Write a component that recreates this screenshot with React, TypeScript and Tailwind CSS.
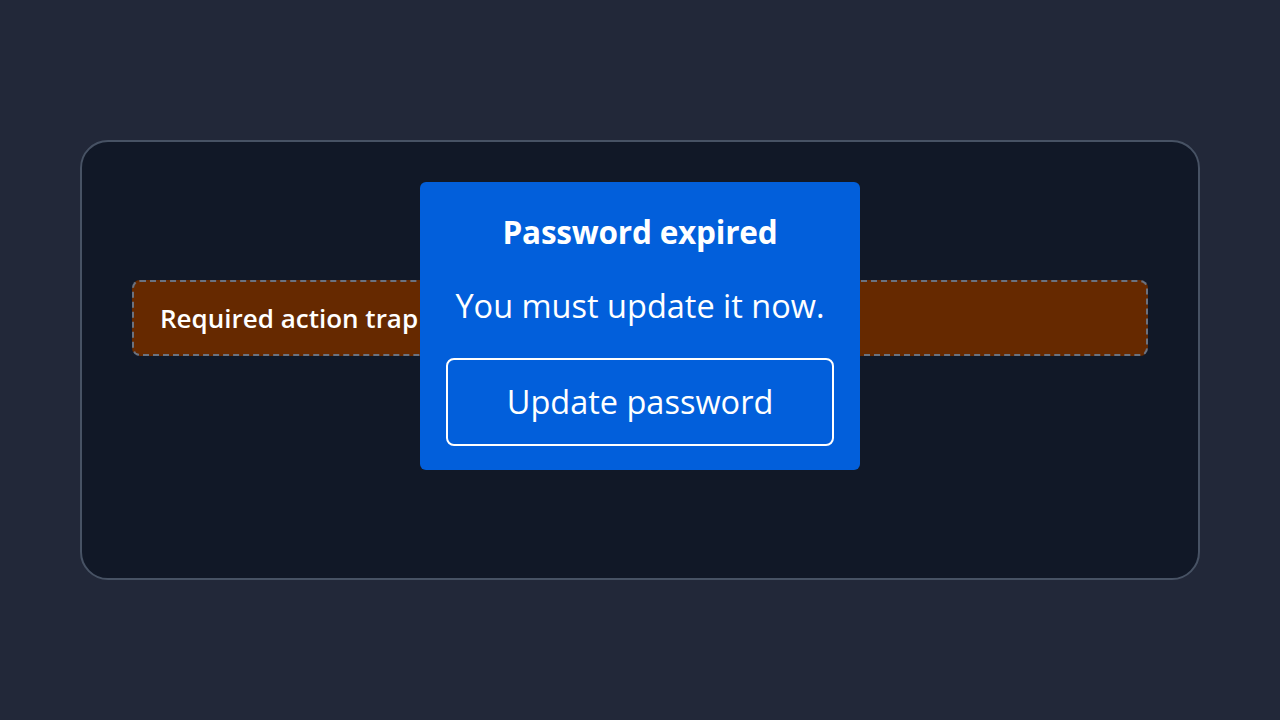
export default function App() {
  return (
    <div
      className="min-h-screen w-full bg-[#222839] flex items-center justify-center"
      style={{ fontFamily: "'Open Sans', 'Noto Sans', sans-serif" }}
    >
      <div className="relative w-[1120px] h-[440px] rounded-[28px] border-2 border-[#475264] bg-[#111827] px-[50px] pt-[138px]">
        <div className="h-[76px] rounded-[8px] border-2 border-dashed border-[#6b7280] bg-[#662900] flex items-center px-[26px]">
          <span className="text-[26px] font-semibold text-white">Required action trap</span>
        </div>

        <div className="absolute left-[338px] top-[40px] w-[440px] h-[288px] rounded-[6px] bg-[#025fdb] px-[26px] pt-[30px] flex flex-col items-center text-white">
          <h2 className="text-[31.5px] font-bold leading-[40px] tracking-[-0.2px]">Password expired</h2>
          <p className="mt-[34px] text-[32.5px] leading-[40px]">You must update it now.</p>
          <button className="mt-[32px] w-full h-[88px] rounded-[8px] border-2 border-white text-[32.5px] leading-[40px] text-white">
            Update password
          </button>
        </div>
      </div>
    </div>
  )
}
